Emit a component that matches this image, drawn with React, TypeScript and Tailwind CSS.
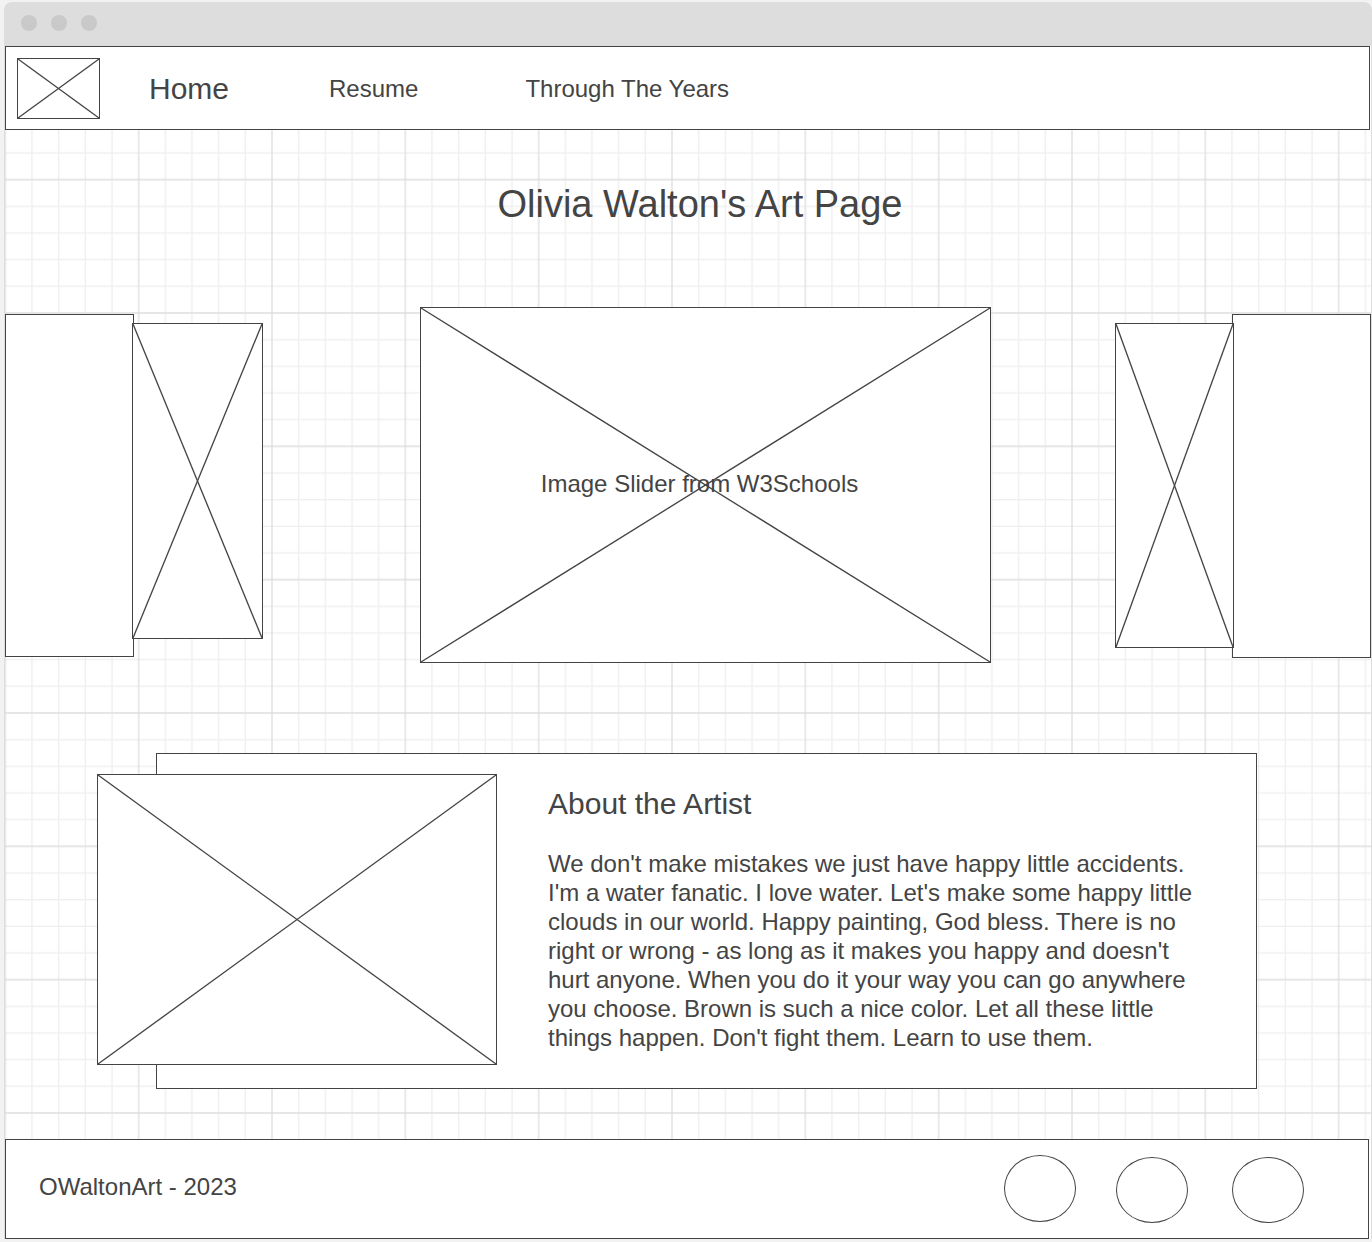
const CELL = 400 / 15;
const BLOCK = CELL * 5;
const MINOR_STEPS = [1, 2, 3, 4];

function GridPaper() {
  return (
    <svg className="pointer-events-none absolute inset-0 h-full w-full" aria-hidden="true">
      <defs>
        <pattern id="grid-paper" x="0.33" y="-83.67" width={BLOCK} height={BLOCK} patternUnits="userSpaceOnUse">
          <g stroke="#eeeeee" strokeWidth="1.33">
            {MINOR_STEPS.map((n) => (
              <path key={n} d={`M${n * CELL} 0V${BLOCK}M0 ${n * CELL}H${BLOCK}`} />
            ))}
          </g>
          <path
            d={`M0 0V${BLOCK}M${BLOCK} 0V${BLOCK}M0 0H${BLOCK}M0 ${BLOCK}H${BLOCK}`}
            stroke="#dedede"
            strokeWidth="1.33"
          />
        </pattern>
      </defs>
      <rect width="100%" height="100%" fill="url(#grid-paper)" />
    </svg>
  );
}

function Placeholder({ className, label }: { className: string; label: string }) {
  return (
    <div className={`border border-[#444] bg-white ${className}`}>
      <svg className="block h-full w-full overflow-visible" role="img" aria-label={label}>
        <g stroke="#444" strokeWidth="1.33">
          <line x1="0" y1="0" x2="100%" y2="100%" />
          <line x1="0" y1="100%" x2="100%" y2="0" />
        </g>
      </svg>
    </div>
  );
}

export default function App() {
  return (
    <div className="bg-[#f2f2f2] pt-0.5 pb-1 pl-1 font-['Liberation_Sans',Arial,sans-serif] text-2xl leading-[29px] text-[#444]">
      <div className="overflow-hidden rounded-t-lg bg-[#ddd]">
        <div className="flex h-11 items-center gap-3.5 pr-4 pb-0.5 pl-[17px]" aria-hidden="true">
          <span className="size-4 rounded-full bg-[#c9c9c9]" />
          <span className="size-4 rounded-full bg-[#c9c9c9]" />
          <span className="size-4 rounded-full bg-[#c9c9c9]" />
        </div>

        <div className="border-x border-[#ddd] bg-white">
          <header className="mr-px flex items-center border border-[#444] bg-white pt-[11px] pb-2.5 pl-[11px]">
            <Placeholder className="h-[61px] w-[83px] shrink-0" label="Logo" />
            <nav className="flex items-center">
              <a href="#home" className="ml-[49px] text-[30px]">Home</a>
              <a href="#resume" className="ml-[100px]">Resume</a>
              <a href="#years" className="ml-[107px]">Through The Years</a>
            </nav>
          </header>

          <main className="relative pt-[52px] pb-[50px]">
            <GridPaper />
            <div className="relative">
              <h1 className="pl-6 text-center text-[38px] leading-[45px]">Olivia Walton's Art Page</h1>

              <section className="mt-20 flex items-start" aria-label="Image slider">
                <div className="mt-[7px] h-[343px] w-[129px] shrink-0 border border-[#444] bg-white" />
                <Placeholder className="relative mt-4 -ml-0.5 h-[316px] w-[131px] shrink-0" label="Previous image" />
                <div className="mr-[124px] ml-[157px] grid flex-1">
                  <Placeholder className="col-start-1 row-start-1 h-[356px]" label="Current image" />
                  <p className="relative col-start-1 row-start-1 self-center pr-3 pb-1 text-center">
                    Image Slider from W3Schools
                  </p>
                </div>
                <Placeholder className="relative z-10 mt-4 h-[325px] w-[119px] shrink-0" label="Next image" />
                <div className="mt-[7px] -ml-0.5 h-[344px] w-[139px] shrink-0 border border-[#444] bg-white" />
              </section>

              <section className="mt-[90px] mr-[114px] ml-[151px] flex items-start border border-[#444] bg-white pr-10 pb-[23px]">
                <Placeholder className="mt-5 -ml-[60px] h-[291px] w-[400px] shrink-0" label="Portrait of the artist" />
                <div className="ml-[51px] flex-1 pt-8">
                  <h2 className="text-[30px] leading-9">About the Artist</h2>
                  <p className="mt-[27px]">
                    We don't make mistakes we just have happy little accidents. I'm a water fanatic. I love water. Let's
                    make some happy little clouds in our world. Happy painting, God bless. There is no right or wrong - as
                    long as it makes you happy and doesn't hurt anyone. When you do it your way you can go anywhere you
                    choose. Brown is such a nice color. Let all these little things happen. Don't fight them. Learn to use
                    them.
                  </p>
                </div>
              </section>
            </div>
          </main>

          <footer className="mr-0.5 flex justify-between border border-[#444] bg-white pt-[15px] pr-16 pb-[15px] pl-[33px]">
            <p className="mt-[17px]">OWaltonArt - 2023</p>
            <div className="flex items-start">
              <a href="#social-1" aria-label="Social link 1" className="h-[67px] w-[72px] rounded-[50%] border border-[#444]" />
              <a href="#social-2" aria-label="Social link 2" className="mt-0.5 ml-10 h-[66px] w-[72px] rounded-[50%] border border-[#444]" />
              <a href="#social-3" aria-label="Social link 3" className="mt-0.5 ml-11 h-[66px] w-[72px] rounded-[50%] border border-[#444]" />
            </div>
          </footer>
        </div>
      </div>
    </div>
  );
}
